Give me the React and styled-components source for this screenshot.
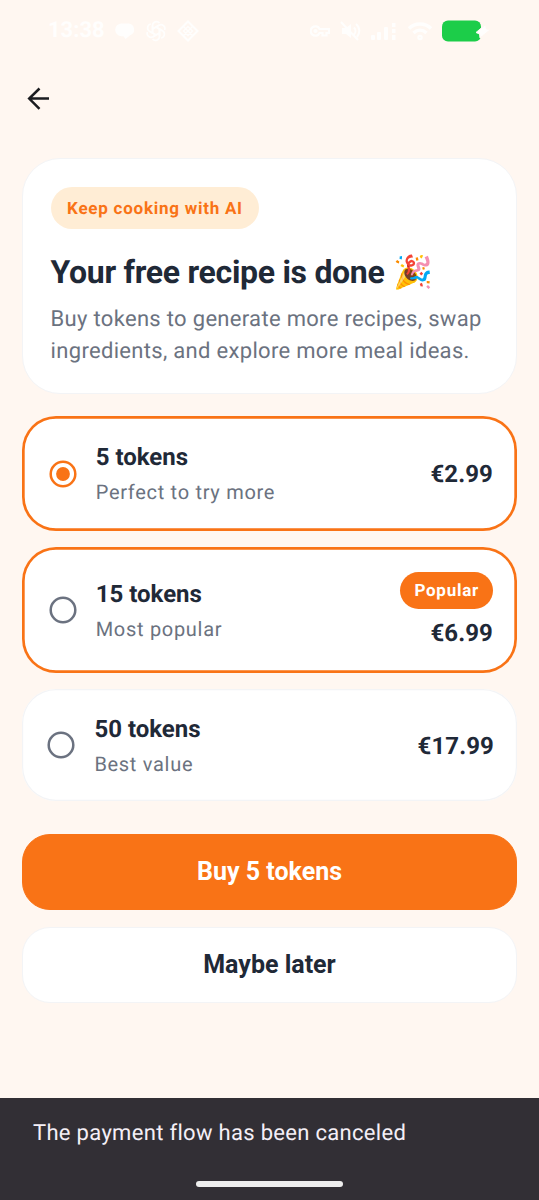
import React, { useState } from 'react';
import styled, { createGlobalStyle } from 'styled-components';

const GlobalStyle = createGlobalStyle`
  * {
    box-sizing: border-box;
  }
  body {
    margin: 0;
    background: #fff7f1;
    font-family: Roboto, 'Noto Color Emoji', sans-serif;
    text-rendering: geometricPrecision;
  }
  button {
    font-family: inherit;
    cursor: pointer;
  }
`;

const St = {
  Screen: styled.div`
    width: 100%;
    height: 1200px;
    display: flex;
    flex-direction: column;
    background: #fff7f1;
    color: #1f2937;
    overflow: hidden;
  `,
  StatusBar: styled.header`
    height: 62px;
    flex: none;
    display: flex;
    align-items: center;
    justify-content: space-between;
    padding: 0 48px 0 48px;
    color: #fffefd;
  `,
  StatusGroup: styled.div`
    display: flex;
    align-items: center;
    gap: ${props => props.$gap}px;
  `,
  Time: styled.span`
    width: 55px;
    margin-right: 2px;
    font-size: 22px;
    font-weight: 700;
    line-height: 26px;
  `,
  AppBar: styled.nav`
    height: 96px;
    flex: none;
    padding: 21px 0 0 22px;
  `,
  Back: styled.button`
    width: 32px;
    height: 32px;
    padding: 0;
    border: 0;
    background: none;
    color: #1b1c20;
    svg {
      display: block;
    }
  `,
  Content: styled.main`
    flex: 1;
    display: flex;
    flex-direction: column;
    padding: 0 22px;
  `,
  Hero: styled.section`
    height: 236px;
    padding: 28px 27.6px 0;
    border: 1.4px solid #f3f4f6;
    border-radius: 38px;
    background: white;
  `,
  Chip: styled.span`
    display: inline-block;
    height: 42px;
    padding: 0 16px 0 16.5px;
    border-radius: 21px;
    background: #ffedd5;
    color: #f97316;
    font-size: 17px;
    font-weight: 700;
    line-height: 44px;
    letter-spacing: 0.75px;
    white-space: nowrap;
  `,
  Title: styled.h1`
    display: flex;
    align-items: center;
    gap: 9px;
    margin: 22px 0 0;
    font-size: 32px;
    font-weight: 700;
    line-height: 42px;
    letter-spacing: -0.3px;
    white-space: nowrap;
  `,
  Text: styled.p`
    margin: 11px 0 0;
    color: #6b7280;
    font-size: 22px;
    line-height: 32px;
    letter-spacing: 0.31px;
    white-space: nowrap;
  `,
  Options: styled.div`
    display: flex;
    flex-direction: column;
    gap: 16px;
    margin-top: 22px;
  `,
  Option: styled.div`
    height: ${props => props.$height}px;
    display: flex;
    align-items: center;
    padding: ${props => (props.$outlined ? '0 24px 0 26.5px' : '0 23px 0 25.2px')};
    border-radius: 34px;
    background: white;
    box-shadow: inset 0 0 0 ${props => (props.$outlined ? '2.7px #f97316' : '1.2px #f3f4f6')};
    cursor: pointer;
  `,
  Labels: styled.div`
    flex: 1;
    margin-left: 19.2px;
  `,
  Name: styled.div`
    font-size: 24px;
    font-weight: 700;
    line-height: 34px;
  `,
  Hint: styled.div`
    margin-top: 3px;
    color: #6b7280;
    font-size: 20px;
    line-height: 30px;
    letter-spacing: 0.7px;
  `,
  PriceBox: styled.div`
    display: flex;
    flex-direction: column;
    align-items: flex-end;
    gap: 7px;
    padding-top: 1px;
  `,
  Popular: styled.span`
    height: 37px;
    padding: 0 14px;
    border-radius: 19px;
    background: #f97316;
    color: white;
    font-size: 17px;
    font-weight: 700;
    line-height: 38px;
    letter-spacing: 0.75px;
  `,
  Price: styled.div`
    font-size: 24px;
    font-weight: 700;
    line-height: 34px;
    letter-spacing: 0.1px;
  `,
  Action: styled.button`
    height: 76px;
    flex: none;
    margin-top: ${props => props.$gap}px;
    padding: 0 0 1px;
    border: 1.4px solid ${props => (props.$primary ? '#f97316' : '#f3f4f6')};
    border-radius: 28px;
    background: ${props => (props.$primary ? '#f97316' : 'white')};
    color: ${props => (props.$primary ? 'white' : '#1f2937')};
    font-size: 25px;
    font-weight: 700;
  `,
  Snackbar: styled.footer`
    height: 102px;
    flex: none;
    display: flex;
    flex-direction: column;
    align-items: center;
    justify-content: space-between;
    padding: 20px 33px 13px;
    background: #322f35;
  `,
  Message: styled.div`
    align-self: flex-start;
    color: #f5eff7;
    font-size: 22px;
    line-height: 32px;
    letter-spacing: 0.31px;
  `,
  HomeBar: styled.div`
    width: 147px;
    height: 6px;
    border-radius: 3px;
    background: #eeeeee;
  `,
};

const packs = [
  { count: 5, hint: 'Perfect to try more', price: '€2.99', height: 115, outlined: true },
  { count: 15, hint: 'Most popular', price: '€6.99', height: 126, outlined: true, popular: true },
  { count: 50, hint: 'Best value', price: '€17.99', height: 112 },
];

function ChatIcon() {
  return (
    <svg width="20" height="20" viewBox="0 0 20 20" fill="currentColor">
      <path d="M6.500 2.500h7a6 6 0 0 1 2 11.500L10.500 18l-2-2.800h-2a6.350 6.350 0 0 1 0-12.700z" />
    </svg>
  );
}

function KnotIcon() {
  return (
    <svg width="22" height="22" viewBox="0 0 22 22" fill="none" stroke="currentColor" strokeWidth="1.6">
      {[0, 60, 120, 180, 240, 300].map(angle => (
        <path key={angle} transform={`rotate(${angle} 11 11)`} d="M7.500 12.800V5.500a4 4 0 0 1 7-2.500M7.500 9l6.500-3.700" />
      ))}
    </svg>
  );
}

function DiamondIcon() {
  return (
    <svg width="22" height="22" viewBox="0 0 22 22" fill="none" stroke="currentColor" strokeWidth="2">
      <path d="M11 1.500l9.500 9.500-9.500 9.500L1.500 11z" />
      <path d="M11 6.500l4.500 4.500-4.500 4.500L6.500 11zM6.200 6.200l9.600 9.600M15.800 6.200l-9.600 9.600" strokeWidth="1.300" />
    </svg>
  );
}

function KeyIcon() {
  return (
    <svg width="20" height="16" viewBox="0 0 20 16" fill="none" stroke="currentColor" strokeWidth="2.200">
      <path d="M9.600 6A4.700 4.700 0 1 0 9.600 10h2.900v2.500h4V10H19V6z" />
      <circle cx="5.500" cy="8" r="1" />
    </svg>
  );
}

function MutedIcon() {
  return (
    <svg width="22" height="22" viewBox="0 0 22 22" fill="none" stroke="currentColor" strokeWidth="2">
      <path d="M3 8h4l5-4v14l-5-4H3z" fill="currentColor" stroke="none" />
      <path d="M15 7.500a5 5 0 0 1 0 7M17 4a9 9 0 0 1 1 13M2 2l17 18" />
    </svg>
  );
}

function SignalIcon() {
  return (
    <svg width="28" height="20" viewBox="0 0 28 20" fill="currentColor">
      <rect x="1" y="14" width="4" height="5" rx="1" />
      <rect x="7" y="11" width="4" height="8" rx="1" />
      <rect x="14" y="6" width="4" height="13" rx="1" />
      <path d="M22 2h3.500v4H22zM22 8h3.500v4H22zM22 14h3.500v5H22z" />
    </svg>
  );
}

function WifiIcon() {
  return (
    <svg width="26" height="20" viewBox="0 0 26 20" fill="none" stroke="currentColor" strokeWidth="3.500">
      <path d="M2 7.500c6-6 16-6 22 0M6.500 12c4-3.700 9-3.700 13 0" />
      <circle cx="13" cy="16.500" r="1" />
    </svg>
  );
}

function BatteryIcon() {
  return (
    <svg width="49" height="22" viewBox="0 0 49 22">
      <rect x="0" y="0.500" width="39" height="21" rx="6" fill="#1ccd49" />
      <path d="M43.500 4.500l-9.500 8 3.500 1.500.5 4 10.500-8.500-4-.5z" fill="#fffefd" stroke="#fff7f1" strokeWidth="1" />
    </svg>
  );
}

function BackIcon() {
  return (
    <svg width="32" height="32" viewBox="0 0 32 32" fill="none" stroke="currentColor" strokeWidth="2.500">
      <path d="M17.500 5.500L7.200 15.600l10.300 10.200M7.200 15.600H27" />
    </svg>
  );
}

function RadioIcon({ checked }) {
  return (
    <svg width="28" height="28" viewBox="0 0 28 28" color={checked ? '#f97316' : '#6b7280'}>
      <circle cx="14" cy="14" r="12.300" fill="none" stroke="currentColor" strokeWidth="2.500" />
      {checked && <circle cx="14" cy="14" r="6.900" fill="currentColor" />}
    </svg>
  );
}

function App() {
  const [selected, setSelected] = useState(5);

  return (
    <St.Screen>
      <GlobalStyle />
      <St.StatusBar>
        <St.StatusGroup $gap={10}>
          <St.Time>13:38</St.Time>
          <ChatIcon />
          <KnotIcon />
          <DiamondIcon />
        </St.StatusGroup>
        <St.StatusGroup $gap={9}>
          <KeyIcon />
          <MutedIcon />
          <SignalIcon />
          <WifiIcon />
          <BatteryIcon />
        </St.StatusGroup>
      </St.StatusBar>
      <St.AppBar>
        <St.Back aria-label="Back">
          <BackIcon />
        </St.Back>
      </St.AppBar>
      <St.Content>
        <St.Hero>
          <St.Chip>Keep cooking with AI</St.Chip>
          <St.Title>
            Your free recipe is done <span>🎉</span>
          </St.Title>
          <St.Text>
            Buy tokens to generate more recipes, swap
            <br />
            ingredients, and explore more meal ideas.
          </St.Text>
        </St.Hero>
        <St.Options>
          {packs.map(pack => (
            <St.Option
              key={pack.count}
              $height={pack.height}
              $outlined={pack.outlined}
              onClick={() => setSelected(pack.count)}
            >
              <RadioIcon checked={selected === pack.count} />
              <St.Labels>
                <St.Name>{pack.count} tokens</St.Name>
                <St.Hint>{pack.hint}</St.Hint>
              </St.Labels>
              <St.PriceBox>
                {pack.popular && <St.Popular>Popular</St.Popular>}
                <St.Price>{pack.price}</St.Price>
              </St.PriceBox>
            </St.Option>
          ))}
        </St.Options>
        <St.Action $primary $gap={33}>Buy {selected} tokens</St.Action>
        <St.Action $gap={17}>Maybe later</St.Action>
      </St.Content>
      <St.Snackbar>
        <St.Message>The payment flow has been canceled</St.Message>
        <St.HomeBar />
      </St.Snackbar>
    </St.Screen>
  );
}

export default App;
